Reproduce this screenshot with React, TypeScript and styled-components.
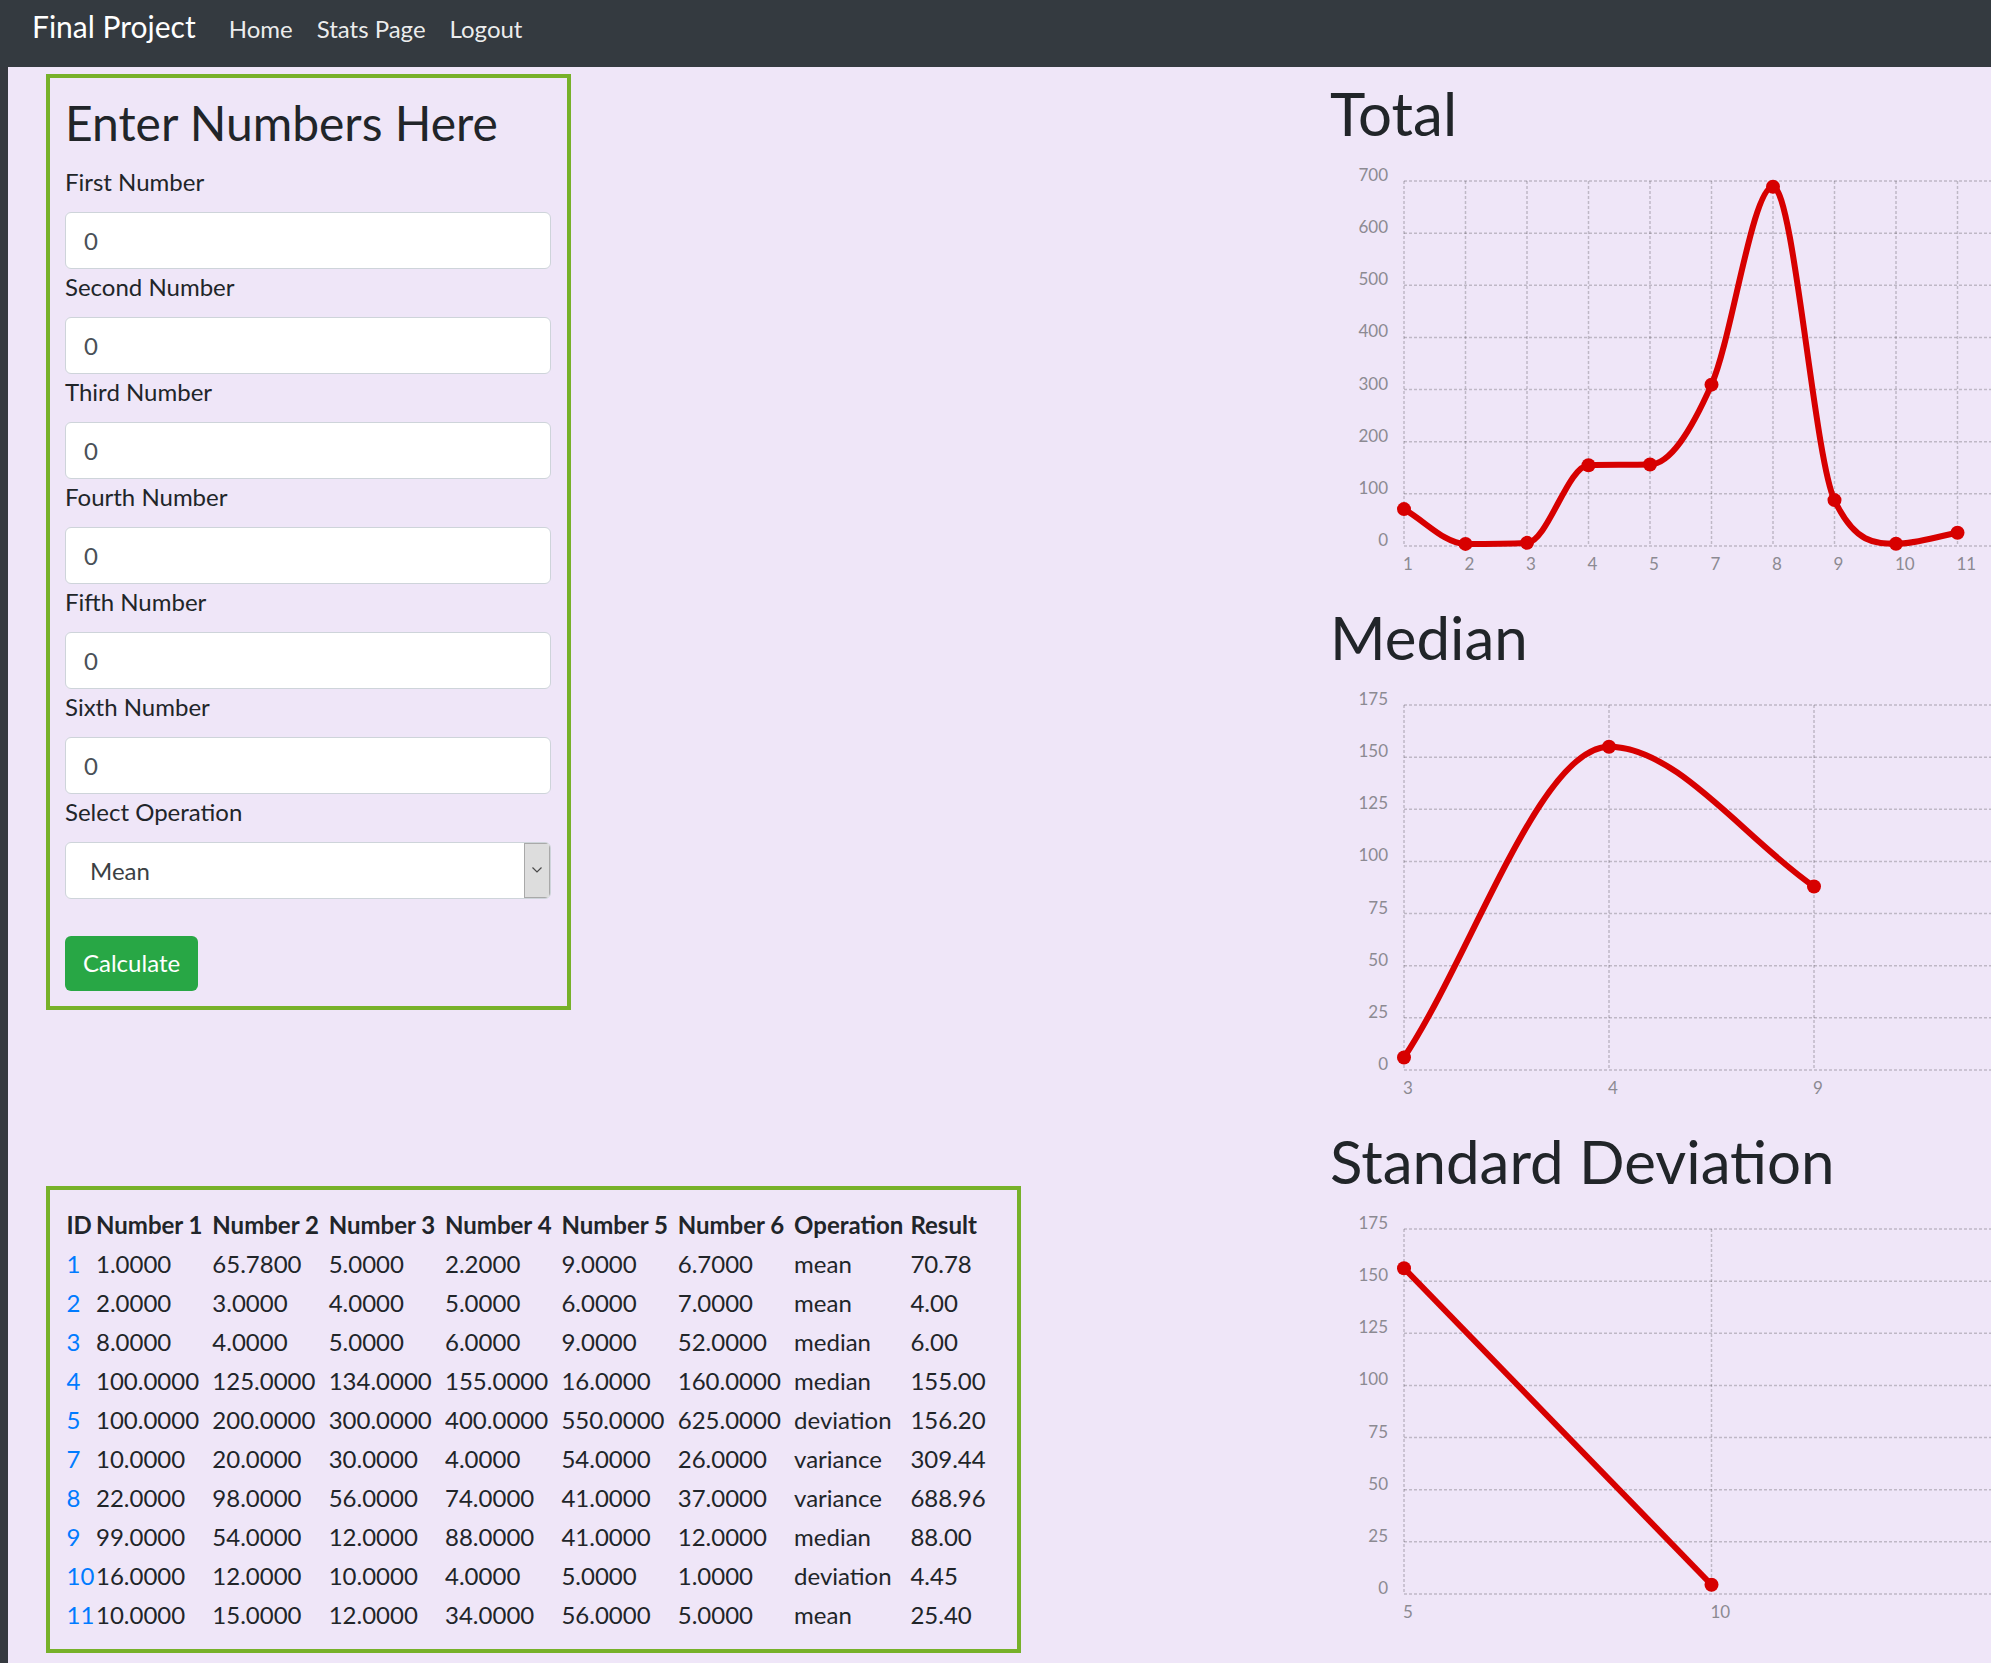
import styled, { createGlobalStyle } from "styled-components";

const GlobalStyle = createGlobalStyle`
  * { box-sizing: border-box; }
  html, body {
    margin: 0;
    padding: 0;
  }
  body {
    background-color: #efe6f8;
    font-family: Lato, "Open Sans", sans-serif;
    color: #212529;
    overflow: hidden;
  }
`;

const Navbar = styled.nav`
  height: 67px;
  background-color: #343a40;
  display: flex;
  align-items: baseline;
  padding: 8px 0 0 32px;
`;

const Brand = styled.a`
  font-size: 30px;
  line-height: 36px;
  color: #fff;
  text-decoration: none;
  margin-right: 21px;
`;

const NavLink = styled.a`
  font-size: 24px;
  line-height: 29px;
  color: rgba(255, 255, 255, 0.92);
  text-decoration: none;
  padding: 0 12px;
`;

const Page = styled.div`
  display: flex;
  min-height: calc(100vh - 67px);
`;

const Strip = styled.div`
  width: 8px;
  flex-shrink: 0;
  background-color: #35393f;
`;

const Content = styled.main`
  flex: 1;
  display: grid;
  grid-template-columns: 1322px 1fr;
  overflow: hidden;
`;

const LeftColumn = styled.div`
  padding: 7px 0 0 38px;
`;

const FormBox = styled.form`
  width: 525px;
  border: 4px solid #77b12a;
  padding: 16px 16px 15px 15px;
`;

const FormTitle = styled.h2`
  margin: 0 0 12px;
  font-size: 48px;
  line-height: 57.6px;
  font-weight: 400;
`;

const FieldLabel = styled.label`
  display: block;
  font-size: 24px;
  line-height: 36px;
  margin-bottom: 12px;
`;

const NumberInput = styled.input`
  display: block;
  width: 100%;
  height: 57px;
  padding: 9px 18px;
  font-family: inherit;
  font-size: 24px;
  color: #495057;
  background-color: #fff;
  border: 1px solid #ced4da;
  border-radius: 6px;
  outline: none;
`;

const SelectWrap = styled.div`
  display: flex;
  height: 57px;
  background-color: #fff;
  border: 1px solid #ced4da;
  border-radius: 6px;
  overflow: hidden;
`;

const OperationSelect = styled.select`
  flex: 1;
  appearance: none;
  border: none;
  outline: none;
  background: transparent;
  font-family: inherit;
  font-size: 24px;
  color: #3b3f44;
  padding: 0 0 0 24px;
`;

const SelectArrow = styled.span`
  width: 26px;
  display: flex;
  align-items: center;
  justify-content: center;
  background-color: #dddddd;
  border: 1px solid #a9a9a9;
`;

const CalcButton = styled.button`
  display: block;
  margin-top: 37px;
  height: 55px;
  padding: 0 18px;
  background-color: #28a745;
  color: #fff;
  border: none;
  border-radius: 6px;
  font-family: inherit;
  font-size: 24px;
  line-height: 36px;
`;

const TableBox = styled.div`
  margin-top: 176px;
  width: fit-content;
  border: 4px solid #77b12a;
  padding: 16px 15px 14px 15px;
`;

const ResultTable = styled.table`
  border-collapse: collapse;
  table-layout: fixed;
  width: 937px;
  font-size: 24px;
  line-height: 36px;

  th, td {
    padding: 1.5px;
    text-align: left;
    white-space: nowrap;
  }
  th {
    font-weight: 700;
  }
`;

const IdLink = styled.a`
  color: #007bff;
  text-decoration: none;
`;

const ChartColumn = styled.div`
  padding-top: 10px;
  overflow: hidden;
`;

const ChartTitle = styled.h1`
  margin: 0 0 12px;
  font-size: 60px;
  line-height: 72px;
  font-weight: 400;
`;

const ChartSvg = styled.svg`
  display: block;
  overflow: visible;
`;

const rows = [
  ["1", "1.0000", "65.7800", "5.0000", "2.2000", "9.0000", "6.7000", "mean", "70.78"],
  ["2", "2.0000", "3.0000", "4.0000", "5.0000", "6.0000", "7.0000", "mean", "4.00"],
  ["3", "8.0000", "4.0000", "5.0000", "6.0000", "9.0000", "52.0000", "median", "6.00"],
  ["4", "100.0000", "125.0000", "134.0000", "155.0000", "16.0000", "160.0000", "median", "155.00"],
  ["5", "100.0000", "200.0000", "300.0000", "400.0000", "550.0000", "625.0000", "deviation", "156.20"],
  ["7", "10.0000", "20.0000", "30.0000", "4.0000", "54.0000", "26.0000", "variance", "309.44"],
  ["8", "22.0000", "98.0000", "56.0000", "74.0000", "41.0000", "37.0000", "variance", "688.96"],
  ["9", "99.0000", "54.0000", "12.0000", "88.0000", "41.0000", "12.0000", "median", "88.00"],
  ["10", "16.0000", "12.0000", "10.0000", "4.0000", "5.0000", "1.0000", "deviation", "4.45"],
  ["11", "10.0000", "15.0000", "12.0000", "34.0000", "56.0000", "5.0000", "mean", "25.40"],
];

const colWidths = [29.5, 116.3, 116.3, 116.3, 116.3, 116.3, 116.3, 116.3, 93];
const headers = ["ID", "Number 1", "Number 2", "Number 3", "Number 4", "Number 5", "Number 6", "Operation", "Result"];
const fields = ["First Number", "Second Number", "Third Number", "Fourth Number", "Fifth Number", "Sixth Number"];

interface Pt { x: number; y: number }

// monotone cubic path (like chart.js cubicInterpolationMode: 'monotone')
function monotonePath(pts: Pt[], top: number, bottom: number) {
  const n = pts.length;
  const cap = (v: number) => Math.max(top, Math.min(bottom, v));
  const delta: number[] = [];
  const m: number[] = [];
  for (let i = 0; i < n - 1; i++) {
    const dx = pts[i + 1].x - pts[i].x;
    delta[i] = dx !== 0 ? (pts[i + 1].y - pts[i].y) / dx : 0;
  }
  for (let i = 0; i < n; i++) {
    if (i === 0) m[i] = delta[0] ?? 0;
    else if (i === n - 1) m[i] = delta[i - 1];
    else if (Math.sign(delta[i - 1]) !== Math.sign(delta[i])) m[i] = 0;
    else m[i] = (delta[i - 1] + delta[i]) / 2;
  }
  for (let i = 0; i < n - 1; i++) {
    if (Math.abs(delta[i]) < 1e-9) {
      m[i] = 0;
      m[i + 1] = 0;
      continue;
    }
    const a = m[i] / delta[i];
    const b = m[i + 1] / delta[i];
    const sq = a * a + b * b;
    if (sq <= 9) continue;
    const tau = 3 / Math.sqrt(sq);
    m[i] = a * tau * delta[i];
    m[i + 1] = b * tau * delta[i];
  }
  let d = `M${pts[0].x},${pts[0].y}`;
  for (let i = 1; i < n; i++) {
    const p = pts[i - 1];
    const c = pts[i];
    const dx = (c.x - p.x) / 3;
    d += ` C${p.x + dx},${cap(p.y + dx * m[i - 1])} ${c.x - dx},${cap(c.y - dx * m[i])} ${c.x},${c.y}`;
  }
  return d;
}

interface LineChartProps {
  labels: string[];
  values: number[];
  max: number;
  step: number;
}

function LineChart({ labels, values, max, step }: LineChartProps) {
  const left = 74;
  const top = 20;
  const bottom = 385;
  const width = 700;
  const gap = 615 / labels.length;
  const pts = values.map((v, i) => ({ x: left + i * gap, y: bottom - (v / max) * (bottom - top) }));
  const ticks: number[] = [];
  for (let v = 0; v <= max; v += step) ticks.push(v);

  return (
    <ChartSvg width={width} height={440}>
      {ticks.map((v) => {
        const y = bottom - (v / max) * (bottom - top);
        return (
          <g key={v}>
            <line x1={left} x2={width} y1={y} y2={y} stroke="rgba(0,0,0,0.2)" strokeWidth={1.5} strokeDasharray="3 2" />
            <text x={58} y={y} textAnchor="end" fontSize={17} fill="#8c8a92" fontFamily="Lato, sans-serif">{v}</text>
          </g>
        );
      })}
      {labels.map((l, i) => {
        const x = left + i * gap;
        return (
          <g key={l}>
            <line x1={x} x2={x} y1={top} y2={bottom} stroke="rgba(0,0,0,0.2)" strokeWidth={1.5} strokeDasharray="3 2" />
            <text x={x - 1} y={409} fontSize={17} fill="#8c8a92" fontFamily="Lato, sans-serif">{l}</text>
          </g>
        );
      })}
      <path d={monotonePath(pts, top, bottom)} fill="none" stroke="#d70000" strokeWidth={6} strokeLinejoin="round" />
      {pts.map((p, i) => (
        <circle key={i} cx={p.x} cy={p.y} r={7} fill="#d70000" />
      ))}
    </ChartSvg>
  );
}

export default function App() {
  return (
    <>
      <GlobalStyle />
      <Navbar>
        <Brand href="#">Final Project</Brand>
        <NavLink href="#">Home</NavLink>
        <NavLink href="#">Stats Page</NavLink>
        <NavLink href="#">Logout</NavLink>
      </Navbar>
      <Page>
        <Strip />
        <Content>
          <LeftColumn>
            <FormBox onSubmit={(e) => e.preventDefault()}>
              <FormTitle>Enter Numbers Here</FormTitle>
              {fields.map((f) => (
                <div key={f}>
                  <FieldLabel>{f}</FieldLabel>
                  <NumberInput type="text" defaultValue="0" />
                </div>
              ))}
              <FieldLabel>Select Operation</FieldLabel>
              <SelectWrap>
                <OperationSelect defaultValue="mean">
                  <option value="mean">Mean</option>
                  <option value="median">Median</option>
                  <option value="deviation">Standard Deviation</option>
                  <option value="variance">Variance</option>
                </OperationSelect>
                <SelectArrow>
                  <svg width="10" height="6" viewBox="0 0 10 6">
                    <polyline points="0.5,0.5 5,5 9.5,0.5" fill="none" stroke="#4a4a4a" strokeWidth="1.2" />
                  </svg>
                </SelectArrow>
              </SelectWrap>
              <CalcButton type="submit">Calculate</CalcButton>
            </FormBox>

            <TableBox>
              <ResultTable>
                <colgroup>
                  {colWidths.map((w, i) => (
                    <col key={i} style={{ width: w }} />
                  ))}
                </colgroup>
                <thead>
                  <tr>
                    {headers.map((h) => (
                      <th key={h}>{h}</th>
                    ))}
                  </tr>
                </thead>
                <tbody>
                  {rows.map((r) => (
                    <tr key={r[0]}>
                      <td><IdLink href="#">{r[0]}</IdLink></td>
                      {r.slice(1).map((c, i) => (
                        <td key={i}>{c}</td>
                      ))}
                    </tr>
                  ))}
                </tbody>
              </ResultTable>
            </TableBox>
          </LeftColumn>

          <ChartColumn>
            <section>
              <ChartTitle>Total</ChartTitle>
              <LineChart
                labels={["1", "2", "3", "4", "5", "7", "8", "9", "10", "11"]}
                values={[70.78, 4, 6, 155, 156.2, 309.44, 688.96, 88, 4.45, 25.4]}
                max={700}
                step={100}
              />
            </section>
            <section>
              <ChartTitle>Median</ChartTitle>
              <LineChart labels={["3", "4", "9"]} values={[6, 155, 88]} max={175} step={25} />
            </section>
            <section>
              <ChartTitle>Standard Deviation</ChartTitle>
              <LineChart labels={["5", "10"]} values={[156.2, 4.45]} max={175} step={25} />
            </section>
          </ChartColumn>
        </Content>
      </Page>
    </>
  );
}
